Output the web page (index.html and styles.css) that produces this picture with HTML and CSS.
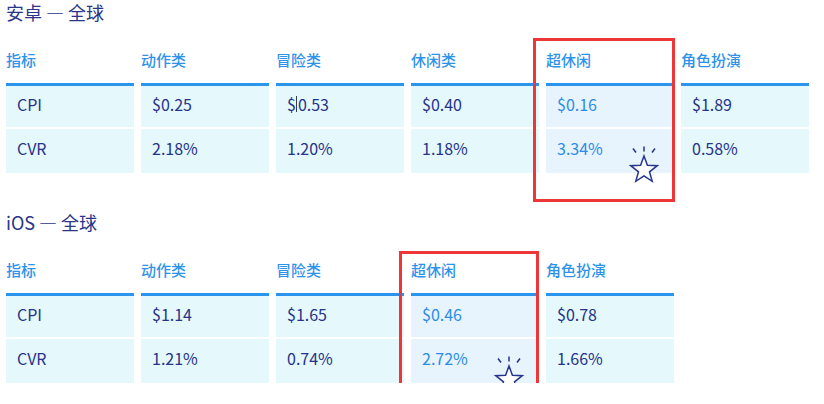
FILE: index.html
```html
<!DOCTYPE html>
<html lang="zh-CN">
<head>
<meta charset="utf-8">
<title>CPI / CVR</title>
<link rel="stylesheet" href="styles.css">
</head>
<body>
<div class="page">
  <section class="block">
    <h2 class="title">安卓 — 全球</h2>
    <div class="grid">
      <div class="th">指标</div>
      <div class="th">动作类</div>
      <div class="th">冒险类</div>
      <div class="th">休闲类</div>
      <div class="th">超休闲</div>
      <div class="th">角色扮演</div>

      <div class="td first">CPI</div>
      <div class="td first">$0.25</div>
      <div class="td first">$<span class="caret"></span>0.53</div>
      <div class="td first">$0.40</div>
      <div class="td first hl">$0.16</div>
      <div class="td first">$1.89</div>

      <div class="td">CVR</div>
      <div class="td">2.18%</div>
      <div class="td">1.20%</div>
      <div class="td">1.18%</div>
      <div class="td hl">3.34%
        <svg class="star" viewBox="0 0 30 40" width="30" height="40" aria-hidden="true">
          <path d="M15 0.5V5.5M4 2.5L7 6.5M26 2.5L23 6.5" />
          <path d="M15 10L18.4 19.3L28.3 19.7L20.5 25.8L23.2 35.3L15 29.8L6.8 35.3L9.5 25.8L1.7 19.7L11.6 19.3Z" />
        </svg>
      </div>
      <div class="td">0.58%</div>
    </div>
    <div class="mark mark-a"></div>
  </section>

  <section class="block block-2">
    <h2 class="title">iOS — 全球</h2>
    <div class="grid grid-5">
      <div class="th">指标</div>
      <div class="th">动作类</div>
      <div class="th">冒险类</div>
      <div class="th">超休闲</div>
      <div class="th">角色扮演</div>

      <div class="td first">CPI</div>
      <div class="td first">$1.14</div>
      <div class="td first">$1.65</div>
      <div class="td first hl">$0.46</div>
      <div class="td first">$0.78</div>

      <div class="td">CVR</div>
      <div class="td">1.21%</div>
      <div class="td">0.74%</div>
      <div class="td hl">2.72%
        <svg class="star" viewBox="0 0 30 40" width="30" height="40" aria-hidden="true">
          <path d="M15 0.5V5.5M4 2.5L7 6.5M26 2.5L23 6.5" />
          <path d="M15 10L18.4 19.3L28.3 19.7L20.5 25.8L23.2 35.3L15 29.8L6.8 35.3L9.5 25.8L1.7 19.7L11.6 19.3Z" />
        </svg>
      </div>
      <div class="td">1.66%</div>
    </div>
    <div class="mark mark-b"></div>
  </section>
</div>
</body>
</html>
```

FILE: styles.css
```css
* { box-sizing: border-box; }

html, body {
  margin: 0;
  padding: 0;
  background: #ffffff;
}

body {
  font-family: "Noto Sans CJK SC", "Noto Sans", sans-serif;
  color: #26338a;
}

.page {
  padding: 0 6px;
}

.block {
  position: relative;
}

.block-2 {
  margin-top: 37px;
}

.title {
  margin: 0;
  font-size: 18px;
  line-height: 24px;
  font-weight: 400;
  color: #2a3689;
}

.grid {
  margin-top: 26px;
  display: grid;
  grid-template-columns: repeat(6, 128px);
  column-gap: 7px;
  row-gap: 2px;
}

.grid-5 {
  grid-template-columns: repeat(5, 128px);
}

.th {
  font-size: 15px;
  line-height: 20px;
  font-weight: 500;
  color: #2d93ea;
  padding: 0 0 11px 0;
}

.td {
  height: 44px;
  padding: 0 0 6px 11px;
  display: flex;
  align-items: center;
  font-size: 16px;
  color: #26338a;
  background: #e5f8fb;
  position: relative;
}

.td.first {
  border-top: 3px solid #2b94ec;
}

.td.hl {
  background: #e7f3fd;
  color: #2b8de6;
}

.caret {
  display: inline-block;
  width: 1px;
  height: 16px;
  background: #333a55;
  margin: 0 0.5px;
}

.star {
  position: absolute;
  left: 83px;
  top: 17px;
  fill: #ffffff;
  stroke: #26358b;
  stroke-width: 1.5;
  stroke-linejoin: miter;
  overflow: visible;
}

.mark {
  position: absolute;
  border: 3px solid #ef3636;
  pointer-events: none;
}

.mark-a {
  left: 527px;
  top: 38px;
  width: 142px;
  height: 164px;
}

.mark-b {
  left: 393px;
  top: 41px;
  width: 140px;
  height: 147px;
}
```
